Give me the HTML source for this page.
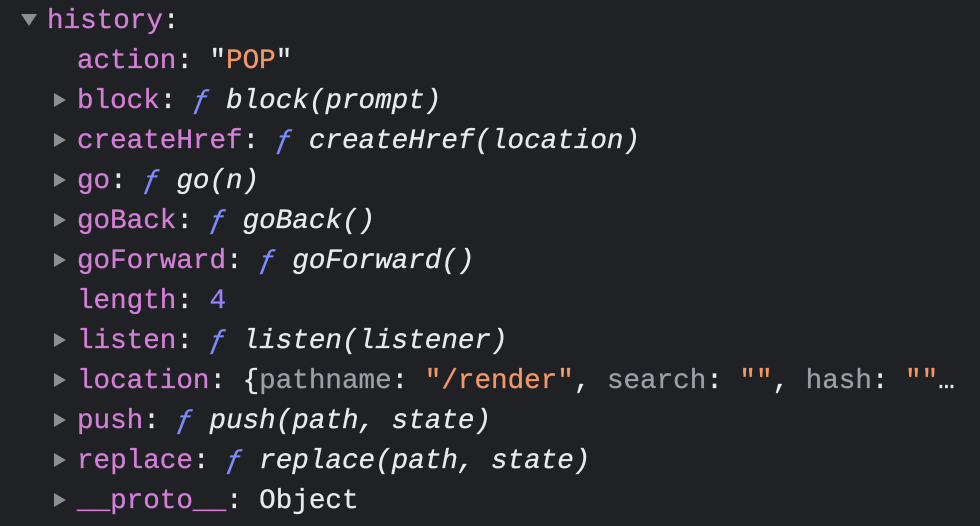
<!DOCTYPE html>
<html><head><style>
html,body{margin:0;background:#202124;width:980px;height:526px;overflow:hidden}
.l{position:absolute;left:77px;height:40px;line-height:44px;font-family:"Liberation Mono",monospace;font-size:27.6px;color:#e8eaed;white-space:pre;-webkit-text-stroke:0.3px currentColor}
.k{color:#d47fd7}.g{color:#9aa0a6}.s{color:#f29766}.f{color:#7c8cff;font-style:italic}.i{font-style:italic}.n{color:#9980ff}
.t{position:absolute;width:0;height:0}
.r{left:54px;border-top:7px solid transparent;border-bottom:7px solid transparent;border-left:12px solid #8e8e8e}
.d{left:21px;top:14px;border-left:8px solid transparent;border-right:8px solid transparent;border-top:12px solid #8e8e8e}
</style></head><body>
<div class="t d"></div>
<div class="l" style="top:0;left:47px"><span class="k">history</span>:</div>
<div class="l" style="top:40px"><span class="k">action</span>: "<span class="s">POP</span>"</div>
<div class="t r" style="top:93px"></div><div class="l" style="top:80px"><span class="k">block</span>: <span class="f">ƒ</span> <span class="i">block(prompt)</span></div>
<div class="t r" style="top:133px"></div><div class="l" style="top:120px"><span class="k">createHref</span>: <span class="f">ƒ</span> <span class="i">createHref(location)</span></div>
<div class="t r" style="top:173px"></div><div class="l" style="top:160px"><span class="k">go</span>: <span class="f">ƒ</span> <span class="i">go(n)</span></div>
<div class="t r" style="top:213px"></div><div class="l" style="top:200px"><span class="k">goBack</span>: <span class="f">ƒ</span> <span class="i">goBack()</span></div>
<div class="t r" style="top:253px"></div><div class="l" style="top:240px"><span class="k">goForward</span>: <span class="f">ƒ</span> <span class="i">goForward()</span></div>
<div class="l" style="top:280px"><span class="k">length</span>: <span class="n">4</span></div>
<div class="t r" style="top:333px"></div><div class="l" style="top:320px"><span class="k">listen</span>: <span class="f">ƒ</span> <span class="i">listen(listener)</span></div>
<div class="t r" style="top:373px"></div><div class="l" style="top:360px"><span class="k">location</span>: {<span class="g">pathname</span>: <span class="s">"/render"</span>, <span class="g">search</span>: <span class="s">""</span>, <span class="g">hash</span>: <span class="s">""</span>…</div>
<div class="t r" style="top:413px"></div><div class="l" style="top:400px"><span class="k">push</span>: <span class="f">ƒ</span> <span class="i">push(path, state)</span></div>
<div class="t r" style="top:453px"></div><div class="l" style="top:440px"><span class="k">replace</span>: <span class="f">ƒ</span> <span class="i">replace(path, state)</span></div>
<div class="t r" style="top:493px"></div><div class="l" style="top:480px"><span class="k">__proto__</span>: Object</div>
</body></html>
